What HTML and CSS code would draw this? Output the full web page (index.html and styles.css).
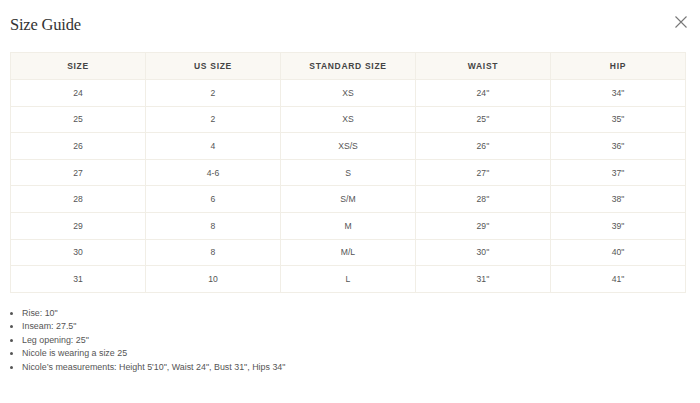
FILE: index.html
```html
<!DOCTYPE html>
<html>
<head>
<meta charset="utf-8">
<link rel="stylesheet" href="styles.css">
</head>
<body>
<div class="modal">
  <div class="head">
    <h1 class="title">Size Guide</h1>
    <button class="close" aria-label="Close">
      <svg width="12" height="12" viewBox="0 0 12 12"><path d="M0.5 0.5L11.5 11.5M11.5 0.5L0.5 11.5" stroke="#777" stroke-width="1.1" fill="none"/></svg>
    </button>
  </div>
  <table class="grid">
    <thead>
      <tr><th>Size</th><th>US Size</th><th>Standard Size</th><th>Waist</th><th>Hip</th></tr>
    </thead>
    <tbody>
      <tr><td>24</td><td>2</td><td>XS</td><td>24''</td><td>34"</td></tr>
      <tr><td>25</td><td>2</td><td>XS</td><td>25''</td><td>35"</td></tr>
      <tr><td>26</td><td>4</td><td>XS/S</td><td>26''</td><td>36"</td></tr>
      <tr><td>27</td><td>4-6</td><td>S</td><td>27''</td><td>37"</td></tr>
      <tr><td>28</td><td>6</td><td>S/M</td><td>28''</td><td>38"</td></tr>
      <tr><td>29</td><td>8</td><td>M</td><td>29''</td><td>39"</td></tr>
      <tr><td>30</td><td>8</td><td>M/L</td><td>30''</td><td>40"</td></tr>
      <tr><td>31</td><td>10</td><td>L</td><td>31''</td><td>41"</td></tr>
    </tbody>
  </table>
  <ul class="notes">
    <li>Rise: 10"</li>
    <li>Inseam: 27.5"</li>
    <li>Leg opening: 25"</li>
    <li>Nicole is wearing a size 25</li>
    <li>Nicole’s measurements: Height 5'10", Waist 24", Bust 31", Hips 34"</li>
  </ul>
</div>
</body>
</html>
```
FILE: styles.css
```css
html, body {
  margin: 0;
  padding: 0;
  background: #fff;
}
.modal {
  padding: 0 14px 0 10px;
  font-family: "Liberation Sans", Arial, sans-serif;
  color: #555;
}
.head {
  display: flex;
  justify-content: space-between;
  align-items: center;
  height: 48px;
}
.title {
  margin: 0;
  font-family: "Liberation Serif", "Times New Roman", serif;
  font-weight: normal;
  font-size: 16.5px;
  color: #333;
  letter-spacing: -0.2px;
  position: relative;
  top: 1px;
}
.close {
  border: 0;
  background: none;
  padding: 0;
  margin-right: -1px;
  width: 12px;
  height: 12px;
  display: flex;
  position: relative;
  top: -2px;
}
.grid {
  width: 676px;
  border-collapse: collapse;
  table-layout: fixed;
  margin-top: 4px;
}
.grid th, .grid td {
  border: 1px solid #f1eee6;
  text-align: center;
  padding: 0;
}
.grid th {
  height: 26px;
  background: #faf8f3;
  text-transform: uppercase;
  font-weight: bold;
  font-size: 8.5px;
  letter-spacing: 0.7px;
  color: #444;
}
.grid td {
  height: 25.6px;
  font-size: 8.6px;
  color: #555;
}
.notes {
  margin: 14px 0 0 0;
  padding: 0 0 0 12px;
  font-size: 8.9px;
  line-height: 13.5px;
  color: #555;
}
.notes li {
  padding-left: 0;
}
```
